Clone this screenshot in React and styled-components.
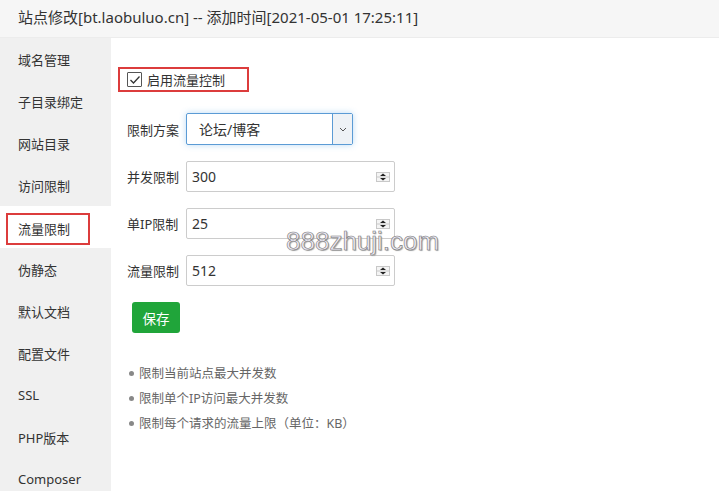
import React from "react";
import styled, { createGlobalStyle } from "styled-components";

const GlobalStyle = createGlobalStyle`
  html, body {
    margin: 0;
    padding: 0;
    background: #fff;
  }
  body {
    font-family: "Noto Sans", "Noto Sans CJK SC", sans-serif;
    color: #333;
  }
`;

const menu = [
  "域名管理",
  "子目录绑定",
  "网站目录",
  "访问限制",
  "流量限制",
  "伪静态",
  "默认文档",
  "配置文件",
  "SSL",
  "PHP版本",
  "Composer",
];

const notes = [
  "限制当前站点最大并发数",
  "限制单个IP访问最大并发数",
  "限制每个请求的流量上限（单位：KB）",
];

const App = () => {
  return (
    <>
      <GlobalStyle />
      <Page>
        <Header>站点修改[bt.laobuluo.cn] -- 添加时间[2021-05-01 17:25:11]</Header>
        <Body>
          <Sidebar>
            {menu.map((item) => (
              <MenuItem key={item} active={item === "流量限制"}>
                <span>{item}</span>
              </MenuItem>
            ))}
          </Sidebar>
          <Content>
            <CheckWrap>
              <CheckBox>
                <svg width="12" height="10" viewBox="0 0 12 10">
                  <path d="M1.5 5 L4.5 8 L10.5 1.5" fill="none" stroke="#333" strokeWidth="1.3" />
                </svg>
              </CheckBox>
              启用流量控制
            </CheckWrap>

            <Row>
              <Label>限制方案</Label>
              <Select>
                <span>论坛/博客</span>
                <Arrow>
                  <svg width="8" height="5" viewBox="0 0 8 5">
                    <path d="M1 1 L4 4 L7 1" fill="none" stroke="#555" strokeWidth="1" />
                  </svg>
                </Arrow>
              </Select>
            </Row>

            <NumberField label="并发限制" value="300" />
            <NumberField label="单IP限制" value="25" />
            <NumberField label="流量限制" value="512" />

            <SaveButton>保存</SaveButton>

            <Notes>
              {notes.map((n) => (
                <li key={n}>{n}</li>
              ))}
            </Notes>

            <Watermark>888zhuji.com</Watermark>
          </Content>
        </Body>
      </Page>
    </>
  );
};

const NumberField = ({ label, value }) => {
  return (
    <Row>
      <Label>{label}</Label>
      <Input>
        <span>{value}</span>
        <Spinner>
          <svg width="14" height="10" viewBox="0 0 14 10">
            <rect x="0.5" y="0.5" width="13" height="9" fill="#f4f4f4" stroke="#c8c8c8" />
            <path d="M4 4 L7 1.5 L10 4 Z" fill="#222" />
            <path d="M4 6 L7 8.5 L10 6 Z" fill="#222" />
            <line x1="1" y1="5" x2="13" y2="5" stroke="#c8c8c8" />
          </svg>
        </Spinner>
      </Input>
    </Row>
  );
};

const Page = styled.div`
  width: 719px;
  height: 491px;
  overflow: hidden;
  display: flex;
  flex-direction: column;
`;

const Header = styled.div`
  height: 37px;
  flex-shrink: 0;
  background: #f6f6f6;
  border-bottom: 1px solid #ececec;
  padding-left: 18px;
  font-size: 15px;
  line-height: 35px;
  color: #333;
  white-space: nowrap;
`;

const Body = styled.div`
  flex: 1;
  display: flex;
`;

const Sidebar = styled.div`
  width: 111px;
  flex-shrink: 0;
  background: #f0f0f0;
`;

const MenuItem = styled.div`
  height: 42px;
  display: flex;
  align-items: center;
  background: ${(p) => (p.active ? "#fff" : "transparent")};
  padding-left: ${(p) => (p.active ? "6px" : "18px")};
  font-size: 13px;
  color: #333;
  span {
    ${(p) =>
      p.active &&
      `
      width: 84px;
      height: 32px;
      box-sizing: border-box;
      border: 2px solid #dc3c3c;
      display: flex;
      align-items: center;
      padding-left: 10px;
      margin-top: 3px;
    `}
  }
`;

const Content = styled.div`
  position: relative;
  flex: 1;
  display: flex;
  flex-direction: column;
  align-items: flex-start;
  padding: 29px 0 0 16px;
`;

const CheckWrap = styled.div`
  margin: 0 0 5px -9px;
  width: 131px;
  height: 25px;
  box-sizing: border-box;
  border: 2px solid #dc3c3c;
  display: flex;
  align-items: center;
  padding-left: 7px;
  gap: 5px;
  font-size: 13px;
  color: #333;
`;

const CheckBox = styled.span`
  width: 13px;
  height: 13px;
  border: 1px solid #555;
  border-radius: 1px;
  display: flex;
  align-items: center;
  justify-content: center;
`;

const Row = styled.div`
  display: flex;
  align-items: center;
  margin-top: 16px;
`;

const Label = styled.div`
  width: 59px;
  font-size: 13px;
  color: #333;
`;

const Select = styled.div`
  width: 167px;
  height: 32px;
  box-sizing: border-box;
  border: 1px solid #5b9bd5;
  border-radius: 2px;
  box-shadow: 0 0 6px rgba(102, 175, 233, 0.45);
  display: flex;
  align-items: center;
  justify-content: space-between;
  font-size: 14px;
  color: #333;
  span {
    padding-left: 12px;
  }
`;

const Arrow = styled.div`
  width: 19px;
  height: 100%;
  border-left: 1px solid #5b9bd5;
  background: #eef2f6;
  display: flex;
  align-items: center;
  justify-content: center;
`;

const Input = styled.div`
  width: 209px;
  height: 31px;
  box-sizing: border-box;
  border: 1px solid #ccc;
  border-radius: 2px;
  display: flex;
  align-items: center;
  justify-content: space-between;
  padding: 0 4px 0 5px;
  font-size: 14px;
  color: #333;
`;

const Spinner = styled.div`
  display: flex;
  align-items: center;
`;

const SaveButton = styled.button`
  display: block;
  margin: 16px 0 0 5px;
  width: 48px;
  height: 31px;
  border: none;
  border-radius: 3px;
  background: #20a53a;
  color: #fff;
  font-family: inherit;
  font-size: 13.5px;
  padding: 0;
`;

const Notes = styled.ul`
  margin: 28px 0 0 0;
  padding: 0 0 0 12px;
  font-size: 12.5px;
  color: #666;
  li {
    line-height: 25px;
    list-style: none;
    position: relative;
  }
  li::before {
    content: "";
    position: absolute;
    left: -10px;
    top: 10px;
    width: 5px;
    height: 5px;
    border-radius: 50%;
    background: #888;
  }
`;

const Watermark = styled.div`
  position: absolute;
  left: 175px;
  top: 188px;
  font-family: "Liberation Sans", sans-serif;
  font-size: 26px;
  line-height: 30px;
  color: #eceaf6;
  -webkit-text-stroke: 0.6px #777;
  text-shadow: 1px 1px 1px #aaa;
  pointer-events: none;
`;

export default App;
